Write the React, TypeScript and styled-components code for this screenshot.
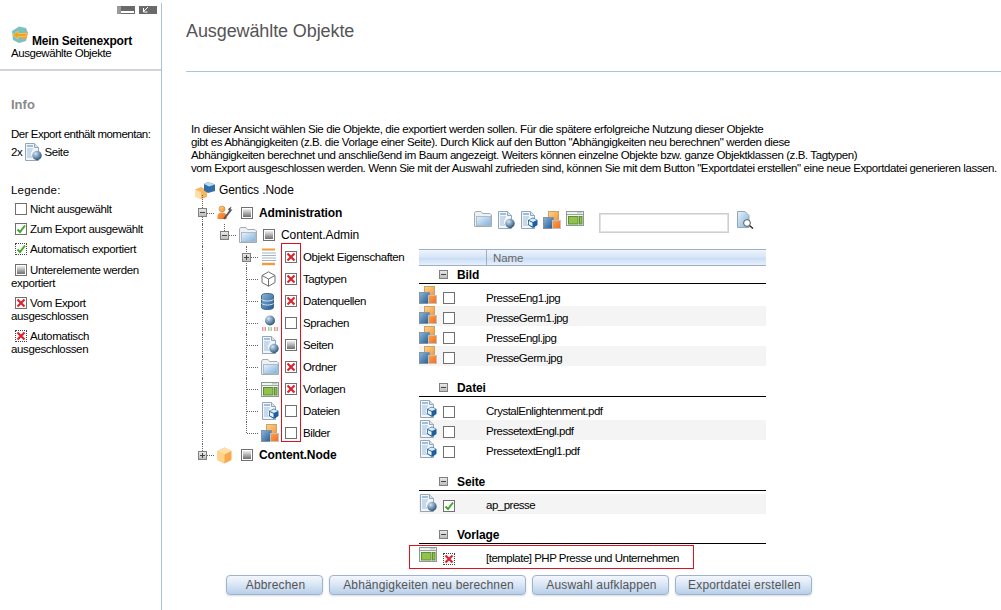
import React from "react";
import styled, { createGlobalStyle } from "styled-components";

const GlobalStyle = createGlobalStyle`
  html, body {
    margin: 0;
    padding: 0;
    background: #fff;
  }
  body {
    font-family: "Liberation Sans", Arial, sans-serif;
    font-size: 12px;
    color: #000;
    overflow: hidden;
  }
`;

const Page = styled.div`
  display: flex;
  width: 1001px;
  height: 610px;
  overflow: hidden;
`;

/* ---------- sidebar ---------- */

const Sidebar = styled.aside`
  width: 161px;
  height: 607px;
  margin-top: 3px;
  border-right: 1px solid #a9c4dc;
  flex: none;
  display: flex;
  flex-direction: column;
`;

const SideTools = styled.div`
  display: flex;
  justify-content: flex-end;
  gap: 4px;
  padding: 3px 4px 0 0;
  height: 8px;
`;

const SideHead = styled.div`
  height: 57px;
  padding: 12px 0 0 11px;
  box-sizing: border-box;
  border-bottom: 2px solid #d2d3da;
`;

const SideTitle = styled.div`
  display: flex;
  align-items: flex-end;
  gap: 3px;
  font-weight: bold;
  line-height: 14px;
  letter-spacing: -0.2px;
  & > svg {
    margin-bottom: 4px;
  }
`;

const SideSub = styled.div`
  margin-top: -2px;
  font-size: 11.5px;
  line-height: 14px;
  letter-spacing: -0.45px;
`;

const InfoHead = styled.div`
  margin: 26px 0 0 11px;
  color: #8a8a8a;
  font-size: 13px;
  font-weight: bold;
  line-height: 15px;
`;

const InfoText = styled.div`
  margin: 15px 0 0 11px;
  font-size: 11.5px;
  line-height: 15px;
  letter-spacing: -0.5px;
  white-space: nowrap;
`;

const InfoCount = styled.div`
  display: flex;
  align-items: center;
  gap: 2px;
  margin: 1px 0 0 11px;
  height: 18px;
  font-size: 11.5px;
  letter-spacing: -0.38px;
`;

const LegendHead = styled.div`
  margin: 22px 0 6px 11px;
  line-height: 14px;
  letter-spacing: 0.2px;
  font-size: 11.5px;
`;

const LegendItem = styled.div<{ $after?: number }>`
  margin: 0 0 ${({ $after }) => $after ?? 7}px 11px;
  width: 136px;
  font-size: 11.5px;
  line-height: 13px;
  letter-spacing: -0.38px;
  & > span:first-child {
    display: inline-block;
    margin: 0 3px 0 4px;
    vertical-align: top;
  }
`;

/* ---------- main ---------- */

const Main = styled.main`
  flex: 1;
  min-width: 0;
  display: flex;
  flex-direction: column;
`;

const TitleBar = styled.header`
  height: 72px;
  margin-left: 24px;
  box-sizing: border-box;
  border-bottom: 1px solid #a9c6dd;
  padding-top: 21px;
`;

const Title = styled.h1`
  margin: 0;
  font-size: 18px;
  font-weight: normal;
  line-height: 20px;
  color: #555;
  letter-spacing: -0.1px;
`;

const Intro = styled.p`
  margin: 51px 0 0 29px;
  font-size: 11.5px;
  line-height: 13px;
  letter-spacing: -0.41px;
  white-space: nowrap;
`;

const Columns = styled.div`
  display: flex;
  margin: 4px 0 0 29px;
`;

/* ---------- tree ---------- */

const Tree = styled.div`
  position: relative;
  width: 228px;
  flex: none;
`;

const RedFrame = styled.div<{ $top: number; $left: number; $w: number; $h: number }>`
  position: absolute;
  top: ${({ $top }) => $top}px;
  left: ${({ $left }) => $left}px;
  width: ${({ $w }) => $w}px;
  height: ${({ $h }) => $h}px;
  border: 1px solid #e0111f;
  box-sizing: border-box;
  pointer-events: none;
`;

const TreeRoot = styled.div`
  display: flex;
  align-items: center;
  height: 22px;
  margin-left: 4px;
  gap: 4px;
  letter-spacing: -0.1px;
`;

const TreeRow = styled.div<{ $h?: number }>`
  display: flex;
  align-items: center;
  height: ${({ $h }) => $h ?? 22}px;
`;

const Guide = styled.span<{ $line?: "full" | "half" | "none"; $branch?: boolean; $rise?: number }>`
  position: relative;
  flex: none;
  width: 22px;
  align-self: stretch;
  display: flex;
  align-items: center;
  justify-content: center;
  &::before {
    content: "";
    position: absolute;
    left: 11px;
    top: ${({ $rise }) => -($rise ?? 0)}px;
    bottom: ${({ $line }) => ($line === "half" ? "50%" : "0")};
    border-left: 1px dotted #666;
    display: ${({ $line }) => ($line === "none" || !$line ? "none" : "block")};
  }
  &::after {
    content: "";
    position: absolute;
    left: 12px;
    top: 50%;
    width: 11px;
    border-top: 1px dotted #666;
    display: ${({ $branch }) => ($branch ? "block" : "none")};
  }
`;

const Expander = styled.span`
  position: relative;
  z-index: 1;
  width: 9px;
  height: 9px;
  box-sizing: border-box;
  border: 1px solid #808080;
  background: linear-gradient(#e8e8e8, #bdbdbd);
  display: block;
  &::before {
    content: "";
    position: absolute;
    left: 1px;
    right: 1px;
    top: 3px;
    height: 1px;
    background: #444;
  }
`;

const PlusExpander = styled(Expander)`
  &::after {
    content: "";
    position: absolute;
    top: 1px;
    bottom: 1px;
    left: 3px;
    width: 1px;
    background: #444;
  }
`;

const IconSlot = styled.span`
  flex: none;
  width: 28px;
  padding-left: 4px;
  box-sizing: border-box;
  display: flex;
  align-items: center;
`;

const TreeLabel = styled.span<{ $bold?: boolean; $tight?: boolean }>`
  margin-left: 6px;
  white-space: nowrap;
  font-weight: ${({ $bold }) => ($bold ? "bold" : "normal")};
  font-size: ${({ $tight }) => ($tight ? 11.5 : 12)}px;
  letter-spacing: ${({ $tight }) => ($tight ? -0.4 : -0.1)}px;
`;

/* ---------- checkboxes ---------- */

type CheckState = "empty" | "check" | "autoCheck" | "partial" | "cross" | "autoCross";

const Box = styled.span<{ $dashed: boolean }>`
  position: relative;
  flex: none;
  display: inline-block;
  width: 12px;
  height: 12px;
  box-sizing: border-box;
  border: 1px ${({ $dashed }) => ($dashed ? "dotted #444" : "solid #707070")};
  background: #fff;
`;

const BoxFill = styled.span`
  position: absolute;
  inset: 1px;
  background: linear-gradient(#efefef, #6e6e6e);
`;

const BoxMark = styled.svg`
  position: absolute;
  left: -1px;
  top: -1px;
  width: 12px;
  height: 12px;
`;

const Check = ({ state }: { state: CheckState }) => (
  <Box $dashed={state === "autoCheck" || state === "autoCross"}>
    {state === "partial" && <BoxFill />}
    {(state === "check" || state === "autoCheck") && (
      <BoxMark viewBox="0 0 12 12">
        <path d="M2.5 6.5 L5 9 L10 2.5" fill="none" stroke="#43a62b" strokeWidth="2" />
      </BoxMark>
    )}
    {(state === "cross" || state === "autoCross") && (
      <BoxMark viewBox="0 0 12 12">
        <path d="M2.5 2.5 L9.5 9.5 M9.5 2.5 L2.5 9.5" fill="none" stroke="#dd2430" strokeWidth="2.2" />
      </BoxMark>
    )}
  </Box>
);

/* ---------- icons ---------- */

const SvgDefs = styled.svg`
  position: absolute;
  width: 0;
  height: 0;
`;

const Gradients = () => (
  <SvgDefs aria-hidden="true">
    <defs>
      <linearGradient id="blueFill" x1="0" y1="0" x2="1" y2="1">
        <stop offset="0" stopColor="#eaf3fb" />
        <stop offset="1" stopColor="#7fb0dc" />
      </linearGradient>
      <linearGradient id="orangeFill" x1="0" y1="0" x2="1" y2="1">
        <stop offset="0" stopColor="#ffd487" />
        <stop offset="1" stopColor="#f2913a" />
      </linearGradient>
      <linearGradient id="redOrange" x1="0" y1="0" x2="1" y2="1">
        <stop offset="0" stopColor="#ffa24d" />
        <stop offset="1" stopColor="#ef6d1f" />
      </linearGradient>
      <linearGradient id="deepBlue" x1="0" y1="0" x2="1" y2="1">
        <stop offset="0" stopColor="#8db6d9" />
        <stop offset="1" stopColor="#21588f" />
      </linearGradient>
      <radialGradient id="globe" cx="0.35" cy="0.3" r="0.8">
        <stop offset="0" stopColor="#d5e2ee" />
        <stop offset="0.6" stopColor="#5f86a8" />
        <stop offset="1" stopColor="#24445f" />
      </radialGradient>
    </defs>
  </SvgDefs>
);

const Ic = styled.svg`
  display: block;
  flex: none;
`;

const PageBase = () => (
  <>
    <path d="M1.5 .5 H10.5 L14.5 4.5 V17.5 H1.5 Z" fill="#f2f6fb" stroke="#94a7b8" />
    <path d="M10.5 .5 V4.5 H14.5" fill="#d5e2ef" stroke="#94a7b8" />
    <path d="M3 3 H9" stroke="#4c85bd" />
    <path d="M3 6 H9 M3 8 H8 M3 10 H7 M3 12 H7 M3 14 H8" stroke="#9dbcd8" />
  </>
);

const PageGlobeIcon = () => (
  <Ic width="18" height="18" viewBox="0 0 18 18">
    <PageBase />
    <circle cx="13" cy="12.5" r="4.7" fill="url(#globe)" />
  </Ic>
);

const PageCubeIcon = () => (
  <Ic width="18" height="18" viewBox="0 0 18 18">
    <PageBase />
    <path d="M8 9 L13 6.5 L17.5 9 V14 L13 17 L8 14 Z" fill="#1d5f9e" />
    <path d="M8.6 9 L13 7.2 L17 9 L13 11 Z" fill="#dcecf8" />
    <path d="M8.8 10 L12.5 11.8 V15.6 L8.8 13.6 Z" fill="#eef5fb" />
  </Ic>
);

const FolderIcon = () => (
  <Ic width="18" height="16" viewBox="0 0 18 16">
    <path d="M.5 15.5 V2 L1.5 .5 H7 L8.5 2.5 H16 L17.5 4 V15.5 Z" fill="#eef1f4" stroke="#a3acb4" />
    <rect x="2.5" y="5.5" width="14" height="9" fill="url(#blueFill)" stroke="#a9bccb" />
  </Ic>
);

const ImagesIcon = () => (
  <Ic width="18" height="18" viewBox="0 0 18 18">
    <rect x="5.5" y=".5" width="10" height="11" fill="url(#orangeFill)" stroke="#c9a36a" />
    <rect x=".5" y="6.5" width="10" height="11" fill="url(#deepBlue)" stroke="#8294a6" />
    <rect x="9.5" y="9.5" width="8" height="8" fill="url(#redOrange)" stroke="#c2c2c2" />
  </Ic>
);

const TemplateIcon = () => (
  <Ic width="18" height="15" viewBox="0 0 18 15">
    <rect x=".5" y=".5" width="17" height="14" fill="#f1f3f2" stroke="#8d9a94" />
    <path d="M1 3.5 H17" stroke="#9aa7a1" />
    <path d="M11 1.8 H16" stroke="#b5bfba" />
    <rect x="2.5" y="5.5" width="9.5" height="7.5" fill="#90c24c" stroke="#5f8e34" />
    <rect x="13.5" y="5.5" width="2.5" height="7.5" fill="#90c24c" stroke="#5f8e34" />
  </Ic>
);

const PropsIcon = () => (
  <Ic width="18" height="18" viewBox="0 0 18 18">
    <path d="M1 1.5 H14" stroke="#f29a3c" strokeWidth="2" />
    <path d="M1 5 H15 M1 7.5 H15 M1 10 H15 M1 12.5 H15" stroke="#9fb4c9" />
    <path d="M1 16 H14" stroke="#f29a3c" strokeWidth="2.4" />
  </Ic>
);

const WireCubeIcon = () => (
  <Ic width="15" height="16" viewBox="0 0 15 16">
    <path d="M7.5 .8 L14 4.5 V11.5 L7.5 15.2 L1 11.5 V4.5 Z M1 4.5 L7.5 8 L14 4.5 M7.5 8 V15.2" fill="#fff" stroke="#6f6f6f" />
  </Ic>
);

const DbIcon = () => (
  <Ic width="13" height="17" viewBox="0 0 13 17">
    <path d="M.5 2.5 C.5 -.2 12.5 -.2 12.5 2.5 V14.5 C12.5 17.2 .5 17.2 .5 14.5 Z" fill="url(#deepBlue)" stroke="#44688a" />
    <path d="M.5 6.5 C3 8.5 10 8.5 12.5 6.5 M.5 10.5 C3 12.5 10 12.5 12.5 10.5" fill="none" stroke="#d3e2ef" />
  </Ic>
);

const LangIcon = () => (
  <Ic width="18" height="17" viewBox="0 0 18 17">
    <circle cx="9" cy="5.5" r="5" fill="url(#globe)" />
    <path d="M1 13 H5 M1 15 H5" stroke="#dc2b2b" strokeDasharray="1.5 1" />
    <path d="M7 13 H11 M7 15 H11" stroke="#3fa142" strokeDasharray="1.5 1" />
    <path d="M13 13 H17 M13 15 H17" stroke="#dc2b2b" strokeDasharray="1.5 1" />
  </Ic>
);

const UserToolIcon = () => (
  <Ic width="16" height="16" viewBox="0 0 16 16">
    <circle cx="5" cy="4" r="3" fill="url(#orangeFill)" stroke="#b9863f" strokeWidth=".6" />
    <path d="M.5 14 V11 C.5 8.5 3 7.5 5 7.5 C7 7.5 9.5 8.5 9.5 11 V14 Z" fill="url(#redOrange)" />
    <path d="M7 14 L13 6" stroke="#555" strokeWidth="2" />
    <path d="M11 4 L14.5 1.5 L13.5 4.5 L15.5 4.5 L13 7.5 Z" fill="#555" />
  </Ic>
);

const OrangeCubeIcon = () => (
  <Ic width="15" height="17" viewBox="0 0 15 17">
    <path d="M7.5 .5 L14.5 4 V13 L7.5 16.5 L.5 13 V4 Z" fill="#f8a94b" />
    <path d="M7.5 .5 L14.5 4 L7.5 7.5 L.5 4 Z" fill="#ffe0a8" />
    <path d="M.5 4 L7.5 7.5 V16.5 L.5 13 Z" fill="#ffd38a" />
  </Ic>
);

const GenticsIcon = () => (
  <Ic width="20" height="18" viewBox="0 0 20 18">
    <path d="M6 6 L12 9 V16 L6 18 L0 15.5 V8.5 Z" fill="#f9b65e" />
    <path d="M0 8.5 L6 11 V18 L0 15.5 Z" fill="#ffe0a8" />
    <path d="M13 1 L20 3.5 V10 L13 12 L9 9.5 V3 Z" fill="#2f6ea8" />
    <path d="M9 3 L13 1 L20 3.5 L14 5.5 Z" fill="#bcd8ee" />
  </Ic>
);

const LogoIcon = () => (
  <Ic width="18" height="18" viewBox="0 0 18 18">
    <path d="M8 .5 L15 2 L17 7 L15 15 L8 17 L2 14 L1 5 Z" fill="#7dc0c4" />
    <path d="M10 14 L16 12 V5 L12 7 Z" fill="#f6a04a" />
    <path d="M2 9 L7 5 V7.5 H15 V10.5 H7 V13 Z" fill="#f7a11a" stroke="#ffd65c" strokeWidth=".6" />
  </Ic>
);

const SearchPageIcon = () => (
  <Ic width="18" height="18" viewBox="0 0 18 18">
    <path d="M1.5 .5 H9 L13 4.5 V16.5 H1.5 Z" fill="url(#blueFill)" stroke="#94a7b8" />
    <circle cx="11" cy="12" r="3.4" fill="#fff" stroke="#555" />
    <path d="M13.5 14.5 L17 17.5" stroke="#333" strokeWidth="1.6" />
  </Ic>
);

const RestoreToggle = () => (
  <Ic width="18" height="8" viewBox="0 0 18 8">
    <rect width="18" height="8" fill="#6a6a6a" />
    <rect x="0" y="0" width="4" height="8" fill="#9a9a9a" />
    <rect x="4" y="5" width="13" height="2" fill="#fff" />
  </Ic>
);

const CollapseToggle = () => (
  <Ic width="18" height="8" viewBox="0 0 18 8">
    <rect width="18" height="8" fill="#6a6a6a" />
    <path d="M9 1 L4.5 5.5 M4.5 2 V6 H8.5" fill="none" stroke="#fff" />
  </Ic>
);

/* ---------- right column ---------- */

const ListPane = styled.div`
  width: 347px;
  flex: none;
`;

const Toolbar = styled.div`
  display: flex;
  align-items: flex-start;
  gap: 5px;
  height: 38px;
  margin-top: 32px;
  padding-left: 55px;
`;

const SearchInput = styled.input`
  width: 130px;
  height: 20px;
  margin: 2px 2px 0 10px;
  box-sizing: border-box;
  border: 1px solid #cfcfcf;
  outline: 1px solid #e2e2e2;
  outline-offset: -2px;
  background: #fff;
`;

const ColumnHeader = styled.div`
  display: flex;
  height: 17px;
  box-sizing: border-box;
  border-top: 1px solid #9fb0c6;
  border-bottom: 1px solid #9fb0c6;
  background: linear-gradient(#eef4fc, #d6e4f6 50%, #c8dcf5 55%, #e8f0fb);
`;

const HeaderCell = styled.div<{ $w?: number }>`
  width: ${({ $w }) => ($w ? `${$w}px` : "auto")};
  flex: ${({ $w }) => ($w ? "none" : 1)};
  padding-left: ${({ $w }) => ($w ? 0 : 6)}px;
  border-left: ${({ $w }) => ($w ? "0" : "1px solid #9fb0c6")};
  color: #666;
  font-size: 11.5px;
  line-height: 16px;
  letter-spacing: -0.1px;
`;

const GroupHead = styled.div<{ $top?: number }>`
  display: flex;
  align-items: center;
  gap: 9px;
  height: 18px;
  margin-top: ${({ $top }) => $top ?? 0}px;
  padding-left: 20px;
  box-sizing: border-box;
  border-bottom: 1px solid #000;
  font-weight: bold;
  letter-spacing: -0.1px;
`;

const GroupRows = styled.div<{ $top?: number }>`
  padding-top: ${({ $top }) => $top ?? 3}px;
`;

const ObjectRow = styled.div<{ $alt?: boolean }>`
  position: relative;
  display: flex;
  align-items: flex-start;
  height: 20px;
  background: ${({ $alt }) => ($alt ? "#f4f4f4" : "transparent")};
`;

const RowIcon = styled.span`
  width: 24px;
  flex: none;
`;

const RowCheck = styled.span`
  width: 43px;
  flex: none;
  padding-top: 6px;
  display: block;
  & > span {
    display: block;
  }
`;

const RowName = styled.span<{ $drop: number }>`
  font-size: 11.5px;
  line-height: 20px;
  margin-top: ${({ $drop }) => $drop}px;
  white-space: nowrap;
  letter-spacing: -0.5px;
`;

const RowRedFrame = styled(RedFrame)`
  z-index: 1;
`;

const Footer = styled.footer`
  display: flex;
  gap: 6px;
  margin: 8px 0 0 64px;
`;

const ActionButton = styled.button<{ $w: number }>`
  width: ${({ $w }) => $w}px;
  height: 20px;
  padding: 0 0 0 2px;
  border: 1px solid #9fb3cc;
  border-radius: 4px;
  background: linear-gradient(#f3f7fd, #dbe7f6 45%, #b8cfe9);
  box-shadow: 0 1px 2px rgba(120, 140, 160, 0.35);
  color: #555;
  font-family: inherit;
  font-size: 12px;
  letter-spacing: 0.16px;
`;

const groups = [
  {
    name: "Bild",
    top: 0,
    rowsTop: 2,
    drop: 2,
    rows: [
      { name: "PresseEng1.jpg", state: "empty" },
      { name: "PresseGerm1.jpg", state: "empty" },
      { name: "PresseEngl.jpg", state: "empty" },
      { name: "PresseGerm.jpg", state: "empty" },
    ],
    icon: <ImagesIcon />,
  },
  {
    name: "Datei",
    top: 13,
    rowsTop: 3,
    drop: 1,
    rows: [
      { name: "CrystalEnlightenment.pdf", state: "empty" },
      { name: "PressetextEngl.pdf", state: "empty" },
      { name: "PressetextEngl1.pdf", state: "empty" },
    ],
    icon: <PageCubeIcon />,
  },
  {
    name: "Seite",
    top: 13,
    rowsTop: 3,
    drop: 1,
    rows: [{ name: "ap_presse", state: "check" }],
    icon: <PageGlobeIcon />,
    altFirst: true,
  },
  {
    name: "Vorlage",
    top: 12,
    rowsTop: 3,
    drop: 1,
    rows: [{ name: "[template] PHP Presse und Unternehmen", state: "autoCross", framed: true }],
    icon: <TemplateIcon />,
  },
] as {
  name: string;
  top: number;
  rowsTop: number;
  drop: number;
  rows: { name: string; state: CheckState; framed?: boolean }[];
  icon: React.ReactNode;
  altFirst?: boolean;
}[];

const typeRows: { name: string; icon: React.ReactNode; state: CheckState; plus?: boolean; last?: boolean }[] = [
  { name: "Objekt Eigenschaften", icon: <PropsIcon />, state: "cross", plus: true },
  { name: "Tagtypen", icon: <WireCubeIcon />, state: "cross" },
  { name: "Datenquellen", icon: <DbIcon />, state: "cross" },
  { name: "Sprachen", icon: <LangIcon />, state: "empty" },
  { name: "Seiten", icon: <PageGlobeIcon />, state: "partial" },
  { name: "Ordner", icon: <FolderIcon />, state: "cross" },
  { name: "Vorlagen", icon: <TemplateIcon />, state: "cross" },
  { name: "Dateien", icon: <PageCubeIcon />, state: "empty" },
  { name: "Bilder", icon: <ImagesIcon />, state: "empty", last: true },
];

export default function App() {
  return (
    <Page>
      <GlobalStyle />
      <Gradients />
      <Sidebar>
        <SideTools>
          <RestoreToggle />
          <CollapseToggle />
        </SideTools>
        <SideHead>
          <SideTitle>
            <LogoIcon />
            Mein Seitenexport
          </SideTitle>
          <SideSub>Ausgewählte Objekte</SideSub>
        </SideHead>
        <InfoHead>Info</InfoHead>
        <InfoText>Der Export enthält momentan:</InfoText>
        <InfoCount>
          2x <PageGlobeIcon /> Seite
        </InfoCount>
        <LegendHead>Legende:</LegendHead>
        <LegendItem>
          <Check state="empty" />
          Nicht ausgewählt
        </LegendItem>
        <LegendItem>
          <Check state="check" />
          Zum Export ausgewählt
        </LegendItem>
        <LegendItem $after={8}>
          <Check state="autoCheck" />
          Automatisch exportiert
        </LegendItem>
        <LegendItem>
          <Check state="partial" />
          Unterelemente werden exportiert
        </LegendItem>
        <LegendItem>
          <Check state="cross" />
          Vom Export ausgeschlossen
        </LegendItem>
        <LegendItem>
          <Check state="autoCross" />
          Automatisch ausgeschlossen
        </LegendItem>
      </Sidebar>

      <Main>
        <TitleBar>
          <Title>Ausgewählte Objekte</Title>
        </TitleBar>
        <Intro>
          In dieser Ansicht wählen Sie die Objekte, die exportiert werden sollen. Für die spätere erfolgreiche Nutzung dieser Objekte
          <br />
          gibt es Abhängigkeiten (z.B. die Vorlage einer Seite). Durch Klick auf den Button "Abhängigkeiten neu berechnen" werden diese
          <br />
          Abhängigkeiten berechnet und anschließend im Baum angezeigt. Weiters können einzelne Objekte bzw. ganze Objektklassen (z.B. Tagtypen)
          <br />
          vom Export ausgeschlossen werden. Wenn Sie mit der Auswahl zufrieden sind, können Sie mit dem Button "Exportdatei erstellen" eine neue Exportdatei generieren lassen.
        </Intro>

        <Columns>
          <Tree>
            <TreeRoot>
              <GenticsIcon />
              Gentics .Node
            </TreeRoot>
            <TreeRow $h={23}>
              <Guide $line="full" $branch $rise={6}>
                <Expander />
              </Guide>
              <IconSlot>
                <UserToolIcon />
              </IconSlot>
              <Check state="partial" />
              <TreeLabel $bold>Administration</TreeLabel>
            </TreeRow>
            <TreeRow>
              <Guide $line="full" />
              <Guide $line="half" $branch>
                <Expander />
              </Guide>
              <IconSlot>
                <FolderIcon />
              </IconSlot>
              <Check state="partial" />
              <TreeLabel>Content.Admin</TreeLabel>
            </TreeRow>
            {typeRows.map((row) => (
              <TreeRow key={row.name}>
                <Guide $line="full" />
                <Guide />
                <Guide $line={row.last ? "half" : "full"} $branch>
                  {row.plus && <PlusExpander />}
                </Guide>
                <IconSlot>{row.icon}</IconSlot>
                <Check state={row.state} />
                <TreeLabel $tight>{row.name}</TreeLabel>
              </TreeRow>
            ))}
            <TreeRow>
              <Guide $line="half" $branch>
                <PlusExpander />
              </Guide>
              <IconSlot>
                <OrangeCubeIcon />
              </IconSlot>
              <Check state="partial" />
              <TreeLabel $bold>Content.Node</TreeLabel>
            </TreeRow>
            <RedFrame $top={64} $left={90} $w={20} $h={199} />
          </Tree>

          <ListPane>
            <Toolbar>
              <FolderIcon />
              <PageGlobeIcon />
              <PageCubeIcon />
              <ImagesIcon />
              <TemplateIcon />
              <SearchInput />
              <SearchPageIcon />
            </Toolbar>
            <ColumnHeader>
              <HeaderCell $w={67} />
              <HeaderCell>Name</HeaderCell>
            </ColumnHeader>
            {groups.map((group) => (
              <section key={group.name}>
                <GroupHead $top={group.top}>
                  <Expander />
                  {group.name}
                </GroupHead>
                <GroupRows $top={group.rowsTop}>
                  {group.rows.map((row, i) => (
                    <ObjectRow key={row.name} $alt={group.altFirst ? i % 2 === 0 : i % 2 === 1}>
                      <RowIcon>{group.icon}</RowIcon>
                      <RowCheck>
                        <Check state={row.state} />
                      </RowCheck>
                      <RowName $drop={group.drop}>{row.name}</RowName>
                      {row.framed && <RowRedFrame $top={-2} $left={-10} $w={285} $h={24} />}
                    </ObjectRow>
                  ))}
                </GroupRows>
              </section>
            ))}
          </ListPane>
        </Columns>

        <Footer>
          <ActionButton $w={97}>Abbrechen</ActionButton>
          <ActionButton $w={197}>Abhängigkeiten neu berechnen</ActionButton>
          <ActionButton $w={137}>Auswahl aufklappen</ActionButton>
          <ActionButton $w={137}>Exportdatei erstellen</ActionButton>
        </Footer>
      </Main>
    </Page>
  );
}
